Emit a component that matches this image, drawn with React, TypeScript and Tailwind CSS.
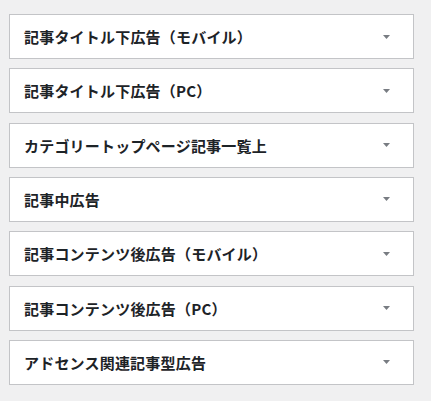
import React from "react";

const items = [
  "記事タイトル下広告（モバイル）",
  "記事タイトル下広告（PC）",
  "カテゴリートップページ記事一覧上",
  "記事中広告",
  "記事コンテンツ後広告（モバイル）",
  "記事コンテンツ後広告（PC）",
  "アドセンス関連記事型広告",
];

export default function App() {
  return (
    <div
      className="w-[431px] h-[401px] bg-[#f0f0f1] pt-[14px] pl-[9px]"
      style={{ fontFamily: '"Noto Sans CJK JP", "Noto Sans", sans-serif' }}
    >
      <div className="flex w-[405px] flex-col gap-[9.33px]">
        {items.map((t) => (
          <div
            key={t}
            className="flex h-[45px] items-center justify-between border border-[#c3c4c7] bg-white pl-[14px] pr-[23px]"
          >
            <span className="text-[15px] font-bold leading-none tracking-[0.2px] text-[#1d2327]">{t}</span>
            <svg width="7" height="4" viewBox="0 0 7 4" className="block">
              <path d="M0 0 H7 L3.5 4 Z" fill="#787c82" />
            </svg>
          </div>
        ))}
      </div>
    </div>
  );
}
